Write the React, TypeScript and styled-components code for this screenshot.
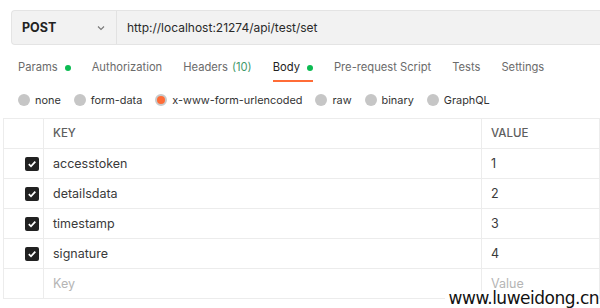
import React from 'react';
import styled, { createGlobalStyle } from 'styled-components';

const GlobalStyle = createGlobalStyle`
  html, body {
    margin: 0;
    padding: 0;
    background: #ffffff;
  }
  body {
    font-family: 'Inter', 'Noto Sans', sans-serif;
    color: #212121;
    overflow: hidden;
  }
`;

const Page = styled.div`
  position: relative;
  width: 600px;
  height: 308px;
  overflow: hidden;
  box-sizing: border-box;
  padding-top: 10px;
`;

const UrlBar = styled.div`
  display: flex;
  align-items: stretch;
  height: 35px;
  margin-left: 11px;
  box-sizing: border-box;
  background: #f2f2f2;
  border: 1px solid #e4e4e4;
  border-right: none;
  border-radius: 4px 0 0 4px;
`;

const Method = styled.div`
  display: flex;
  align-items: center;
  justify-content: space-between;
  width: 105px;
  box-sizing: border-box;
  padding: 0 10px 0 10px;
  border-right: 1px solid #e2e2e2;
  font-size: 12.5px;
  font-weight: 700;
  color: #222;
`;

const Url = styled.div`
  display: flex;
  align-items: center;
  padding-left: 10px;
  font-size: 12px;
  color: #2a2a2a;
`;

const Tabs = styled.div`
  display: flex;
  gap: 21px;
  height: 27px;
  margin-top: 10px;
  padding-left: 18px;
`;

const Tab = styled.div<{ $active?: boolean }>`
  position: relative;
  display: flex;
  align-items: flex-start;
  font-size: 11.2px;
  line-height: 25px;
  color: ${(p) => (p.$active ? '#212121' : '#6b6b6b')};

  &::after {
    content: '';
    display: ${(p) => (p.$active ? 'block' : 'none')};
    position: absolute;
    left: 0;
    right: 0;
    bottom: 0;
    height: 2px;
    background: #ff6c37;
  }
`;

const Dot = styled.span`
  width: 6px;
  height: 6px;
  margin: 10px 0 0 7px;
  border-radius: 50%;
  background: #0cbb52;
`;

const Count = styled.span`
  color: #3f9a6c;
  margin-left: 4px;
`;

const Radios = styled.div`
  display: flex;
  align-items: center;
  gap: 13px;
  height: 36px;
  padding-left: 18px;
`;

const Radio = styled.label`
  display: flex;
  align-items: center;
  gap: 5px;
  font-size: 10.9px;
  color: #333;
`;

const Circle = styled.span<{ $on?: boolean }>`
  width: 12px;
  height: 12px;
  box-sizing: border-box;
  border-radius: 50%;
  background: ${(p) => (p.$on ? '#ff6c37' : '#c6c6c6')};
  border: ${(p) => (p.$on ? '2.5px solid #c9c9c9' : 'none')};
`;

const Table = styled.div`
  margin-left: 3px;
  border-top: 1px solid #ececec;
  border-left: 1px solid #ececec;
`;

const Row = styled.div`
  display: grid;
  grid-template-columns: 40px 438px 1fr;
  height: 30px;
  box-sizing: border-box;
  border-bottom: 1px solid #ececec;
`;

const Cell = styled.div<{ $muted?: boolean; $head?: boolean }>`
  display: flex;
  align-items: center;
  padding-left: 9px;
  line-height: 13px;
  font-size: ${(p) => (p.$head ? '11.5px' : '12.5px')};
  font-weight: ${(p) => (p.$head ? 500 : 400)};
  color: ${(p) => (p.$muted ? '#b5b5b5' : p.$head ? '#5e5e5e' : '#3a3a3a')};
  border-right: 1px solid #ececec;
`;

const CheckCell = styled.div`
  display: flex;
  align-items: center;
  justify-content: center;
  padding-left: 17px;
  border-right: 1px solid #ececec;
`;

const Box = styled.span`
  display: flex;
  align-items: center;
  justify-content: center;
  width: 14px;
  height: 14px;
  border-radius: 2px;
  background: #212121;
`;

const Watermark = styled.div`
  position: absolute;
  right: 1px;
  bottom: 3px;
  font-family: 'DejaVu Sans', 'Noto Sans', sans-serif;
  font-size: 17px;
  letter-spacing: -0.5px;
  color: #111;
  background: #fff;
  padding: 0 0 0 4px;
  line-height: 14px;
`;

const Chevron = () => (
  <svg width="10" height="10" viewBox="0 0 10 10">
    <path d="M2 3.5 L5 6.5 L8 3.5" fill="none" stroke="#777" strokeWidth="1.1" />
  </svg>
);

const Check = () => (
  <svg width="10" height="10" viewBox="0 0 10 10">
    <path d="M1.8 5.2 L4 7.3 L8.3 2.6" fill="none" stroke="#fff" strokeWidth="1.8" />
  </svg>
);

const params = [
  { key: 'accesstoken', value: '1' },
  { key: 'detailsdata', value: '2' },
  { key: 'timestamp', value: '3' },
  { key: 'signature', value: '4' },
];

const bodyTypes = ['none', 'form-data', 'x-www-form-urlencoded', 'raw', 'binary', 'GraphQL'];

const App: React.FC = () => (
  <>
    <GlobalStyle />
    <Page>
      <UrlBar>
        <Method>
          POST
          <Chevron />
        </Method>
        <Url>http://localhost:21274/api/test/set</Url>
      </UrlBar>
      <Tabs>
        <Tab>Params<Dot /></Tab>
        <Tab>Authorization</Tab>
        <Tab>Headers<Count>(10)</Count></Tab>
        <Tab $active>Body<Dot /></Tab>
        <Tab>Pre-request Script</Tab>
        <Tab>Tests</Tab>
        <Tab>Settings</Tab>
      </Tabs>
      <Radios>
        {bodyTypes.map((b) => (
          <Radio key={b}>
            <Circle $on={b === 'x-www-form-urlencoded'} />
            {b}
          </Radio>
        ))}
      </Radios>
      <Table>
        <Row>
          <CheckCell />
          <Cell $head>KEY</Cell>
          <Cell $head>VALUE</Cell>
        </Row>
        {params.map((p) => (
          <Row key={p.key}>
            <CheckCell>
              <Box><Check /></Box>
            </CheckCell>
            <Cell>{p.key}</Cell>
            <Cell>{p.value}</Cell>
          </Row>
        ))}
        <Row>
          <CheckCell />
          <Cell $muted>Key</Cell>
          <Cell $muted>Value</Cell>
        </Row>
      </Table>
      <Watermark>www.luweidong.cn</Watermark>
    </Page>
  </>
);

export default App;
